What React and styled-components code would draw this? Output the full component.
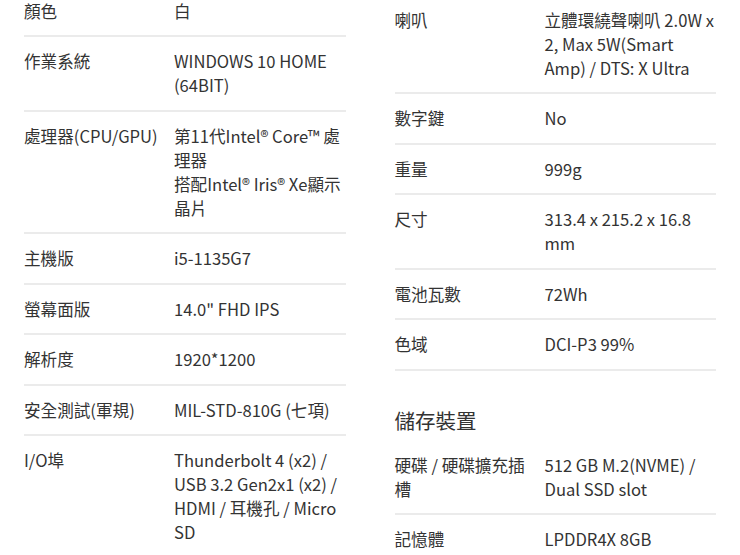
import React from "react";
import styled, { createGlobalStyle } from "styled-components";

const GlobalStyle = createGlobalStyle`
  html, body {
    margin: 0;
    padding: 0;
    background: #fff;
    overflow: hidden;
  }
  body {
    font-family: "Noto Sans CJK TC", "Noto Sans", sans-serif;
    color: #333;
  }
`;

const Page = styled.div`
  display: grid;
  grid-template-columns: 1fr 1fr;
  column-gap: 49px;
  padding: 0 24px;
  margin-top: -13.5px;
`;

const Column = styled.div`
  padding-top: ${(p) => p.$offset || 0}px;
`;

const Table = styled.div`
  display: flex;
  flex-direction: column;
`;

const Row = styled.div`
  display: grid;
  grid-template-columns: 150px 1fr;
  padding: 12.25px 0;
  border-bottom: 2px solid #ebebeb;
  font-size: 16.6px;
  line-height: 24px;
`;

const Label = styled.div`
  padding-right: 12px;
`;

const Value = styled.div`
  word-break: normal;
`;

const SectionTitle = styled.h3`
  margin: 34px 0 6px;
  font-size: 20.5px;
  font-weight: 400;
  line-height: 30px;
  color: #333;
`;

const leftSpecs = [
  ["顏色", ["白"]],
  ["作業系統", ["WINDOWS 10 HOME (64BIT)"]],
  ["處理器(CPU/GPU)", ["第11代Intel® Core™ 處理器", "搭配Intel® Iris® Xe顯示晶片"]],
  ["主機版", ["i5-1135G7"]],
  ["螢幕面版", ['14.0" FHD IPS']],
  ["解析度", ["1920*1200"]],
  ["安全測試(軍規)", ["MIL-STD-810G (七項)"]],
  ["I/O埠", ["Thunderbolt 4 (x2) / USB 3.2 Gen2x1 (x2) / HDMI / 耳機孔 / Micro SD"]],
];

const rightSpecs = [
  ["喇叭", ["立體環繞聲喇叭 2.0W x 2, Max 5W(Smart Amp) / DTS: X Ultra"]],
  ["數字鍵", ["No"]],
  ["重量", ["999g"]],
  ["尺寸", ["313.4 x 215.2 x 16.8 mm"]],
  ["電池瓦數", ["72Wh"]],
  ["色域", ["DCI-P3 99%"]],
];

const storageSpecs = [
  ["硬碟 / 硬碟擴充插槽", ["512 GB M.2(NVME) / Dual SSD slot"]],
  ["記憶體", ["LPDDR4X 8GB"]],
];

function SpecTable({ items }) {
  return (
    <Table>
      {items.map(([label, lines]) => (
        <Row key={label}>
          <Label>{label}</Label>
          <Value>
            {lines.map((line) => (
              <div key={line}>{line}</div>
            ))}
          </Value>
        </Row>
      ))}
    </Table>
  );
}

export default function App() {
  return (
    <>
      <GlobalStyle />
      <Page>
        <Column>
          <SpecTable items={leftSpecs} />
        </Column>
        <Column $offset={9}>
          <SpecTable items={rightSpecs} />
          <SectionTitle>儲存裝置</SectionTitle>
          <SpecTable items={storageSpecs} />
        </Column>
      </Page>
    </>
  );
}
